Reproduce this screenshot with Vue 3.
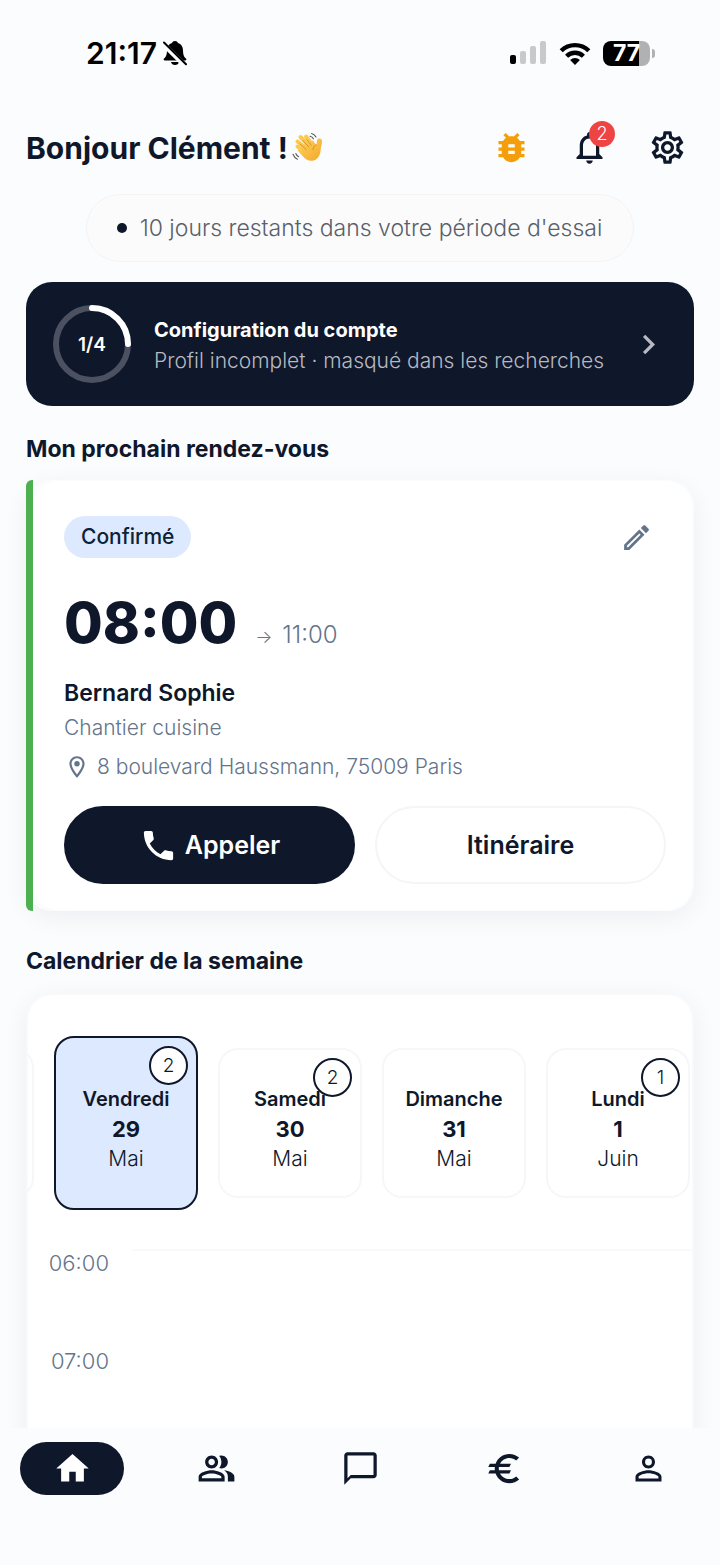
<script setup>
import { ref, onMounted } from 'vue'

const days = [
  { id: 'd29', name: 'Vendredi', date: '29', month: 'Mai', count: 2 },
  { id: 'd30', name: 'Samedi', date: '30', month: 'Mai', count: 2 },
  { id: 'd31', name: 'Dimanche', date: '31', month: 'Mai', count: 0 },
  { id: 'd01', name: 'Lundi', date: '1', month: 'Juin', count: 1 }
]
const hours = ['06:00', '07:00']
const selected = ref('d29')
const strip = ref(null)

const tabs = [
  { id: 'home', label: 'Accueil', path: 'M10 20v-6h4v6h5v-8h3L12 3 2 12h3v8z' },
  { id: 'clients', label: 'Clients', path: 'M16.67 13.13C18.04 14.06 19 15.32 19 17v3h4v-3c0-2.18-3.57-3.47-6.33-3.87zM15 12c2.21 0 4-1.79 4-4s-1.79-4-4-4c-.47 0-.91.1-1.33.24C14.5 5.27 15 6.58 15 8s-.5 2.73-1.33 3.76c.42.14.86.24 1.33.24zM9 12c2.21 0 4-1.79 4-4s-1.79-4-4-4-4 1.79-4 4 1.79 4 4 4zm0-6c1.1 0 2 .9 2 2s-.9 2-2 2-2-.9-2-2 .9-2 2-2zM9 13c-2.67 0-8 1.34-8 4v3h16v-3c0-2.66-5.33-4-8-4zm6 5H3v-.99C3.2 16.29 6.3 15 9 15s5.8 1.29 6 2v1z' },
  { id: 'messages', label: 'Messages', path: 'M20 2H4c-1.1 0-2 .9-2 2v18l4-4h14c1.1 0 2-.9 2-2V4c0-1.1-.9-2-2-2zm0 14H6l-2 2V4h16v12z' },
  { id: 'billing', label: 'Factures', path: 'M15 18.5c-2.51 0-4.68-1.42-5.76-3.5H15l1-2H8.58c-.05-.33-.08-.66-.08-1s.03-.67.08-1H15l1-2H9.24C10.32 6.92 12.5 5.5 15 5.5c1.61 0 3.09.59 4.23 1.57L21 5.3C19.41 3.87 17.3 3 15 3c-3.92 0-7.24 2.51-8.48 6H3l-1 2h4.06c-.04.33-.06.66-.06 1s.02.67.06 1H3l-1 2h4.52c1.24 3.49 4.56 6 8.48 6 2.31 0 4.41-.87 6-2.3l-1.78-1.77c-1.13.98-2.6 1.57-4.22 1.57z' },
  { id: 'profile', label: 'Profil', path: 'M12 5.9a2.1 2.1 0 1 1 0 4.2 2.1 2.1 0 0 1 0-4.2m0 9c2.97 0 6.1 1.46 6.1 2.1v1.1H5.9V17c0-.64 3.13-2.1 6.1-2.1M12 4C9.79 4 8 5.79 8 8s1.79 4 4 4 4-1.79 4-4-1.79-4-4-4zm0 9c-2.67 0-8 1.34-8 4v3h16v-3c0-2.66-5.33-4-8-4z' }
]
const activeTab = ref('home')

// Bring the selected day to the left of the strip
onMounted(() => {
  const el = strip.value.querySelector('.day.active')
  strip.value.scrollLeft = el.offsetLeft - strip.value.offsetLeft - 26
})
</script>

<template>
  <div class="app">
    <div class="status">
      <div class="status-left">
        <span>21:17</span>
        <svg class="muted" viewBox="0 0 24 26" aria-hidden="true">
          <path d="M12 1c1.600 0 2.600.8 3 2 3.300 1 4.900 3.800 5 7.300.1 4.600 1 6.600 3 8.300.6.600.5 1.900-.8 1.900H1.800c-1.300 0-1.400-1.300-.8-1.900 2-1.700 2.900-3.700 3-8.300.1-3.500 1.700-6.300 5-7.300.4-1.200 1.400-2 3-2zM8 22h8c-.4 2-2 3-4 3s-3.600-1-4-3z" fill="currentColor" />
          <path d="M-.5 3.300 22.500 26" stroke="#fafcfe" stroke-width="5" />
          <path d="M1 2.500 23 24.200" stroke="currentColor" stroke-width="2" stroke-linecap="round" />
        </svg>
      </div>
      <div class="status-right">
        <svg class="signal" viewBox="0 0 37 24" aria-hidden="true">
          <rect x="0" y="14" width="6" height="9" rx="2" />
          <g fill="#c8c9cb">
            <rect x="10" y="10" width="6" height="13" rx="2" />
            <rect x="20" y="5" width="6" height="18" rx="2" />
            <rect x="30" y="0" width="6" height="23" rx="2" />
          </g>
        </svg>
        <svg class="wifi" viewBox="0 0 32 23" aria-hidden="true">
          <g fill="none" stroke="currentColor" stroke-width="4.400">
            <path d="M2.200 8.800a19.600 19.600 0 0 1 27.600 0" />
            <path d="M7.600 14.200a12 12 0 0 1 16.800 0" />
          </g>
          <path d="M16 23l-4.900-4.900a7 7 0 0 1 9.800 0z" />
        </svg>
        <div class="battery"><span class="level">77</span></div>
      </div>
    </div>

    <main class="content">
      <header class="head">
        <h1>
          Bonjour Clément !
          <svg class="wave" viewBox="0 0 32 32" role="img" aria-label="Salut">
            <defs>
              <linearGradient id="skin" x1="0" y1="0" x2="1" y2="1">
                <stop offset="0" stop-color="#ffd45c" />
                <stop offset="1" stop-color="#f3a72c" />
              </linearGradient>
            </defs>
            <g stroke="#fdc94c" stroke-linecap="round" fill="none" stroke-width="4">
              <path d="M15 17 5.500 9.500" />
              <path d="M17.500 14.500 8.500 5" />
              <path d="M20.500 13 14 4.500" />
              <path d="M13 20 5.500 14.500" />
            </g>
            <path d="M11 13 21 8.500c1 1.500 2.200 3.300 3.300 4.200.9-1.500.2-3.600 1-5.200.8-1.500 4.300-1.200 4.600.8.500 3-.9 5.500-1.100 8.500-.2 5.500-2.500 11.200-8.200 12-4.300.5-7.300-1.800-10-4.800l-5-5.500z" fill="url(#skin)" />
            <path d="M7.700 11.800l6.500 5.700M11 8.500l5.800 6.500M14.800 7.500l4.500 5.800M24.300 12.800c-2 1-3.200 2.800-3.300 5" stroke="#d98a22" stroke-width=".9" fill="none" stroke-linecap="round" />
            <path d="M18 4.200c1.500.4 2.700 1.300 3.400 2.600M19.600 1.500c2 .7 3.500 1.900 4.400 3.600M3.800 21.500c.5 1.400 1.500 2.600 2.900 3.300M1 22.300c.8 2.200 2.300 3.900 4.400 4.900" stroke="#5b5b60" stroke-width="1.100" fill="none" stroke-linecap="round" />
          </svg>
        </h1>
        <div class="actions">
          <button type="button" class="icon-btn bug" aria-label="Signaler un bug">
            <svg viewBox="0 0 24 24"><path d="M20 8h-2.810c-.45-.78-1.070-1.450-1.820-1.960L17 4.410 15.590 3l-2.170 2.170C12.960 5.060 12.490 5 12 5c-.49 0-.96.06-1.410.17L8.410 3 7 4.410l1.620 1.630C7.880 6.550 7.260 7.220 6.810 8H4v2h2.090c-.05.33-.09.66-.09 1v1H4v2h2v1c0 .34.04.67.09 1H4v2h2.810c1.040 1.790 2.970 3 5.190 3s4.150-1.210 5.190-3H20v-2h-2.090c.05-.33.09-.66.09-1v-1h2v-2h-2v-1c0-.34-.04-.67-.09-1H20V8zm-6 8h-4v-2h4v2zm0-4h-4v-2h4v2z" /></svg>
          </button>
          <button type="button" class="icon-btn" aria-label="Notifications">
            <svg viewBox="0 0 24 24"><path d="M12 22c1.100 0 2-.9 2-2h-4c0 1.100.9 2 2 2zm6-6v-5c0-3.070-1.630-5.640-4.500-6.320V4c0-.83-.67-1.500-1.500-1.500s-1.500.67-1.500 1.500v.68C7.640 5.360 6 7.920 6 11v5l-2 2v1h16v-1l-2-2zm-2 1H8v-6c0-2.480 1.510-4.500 4-4.500s4 2.020 4 4.500v6z" /></svg>
            <span class="notif">2</span>
          </button>
          <button type="button" class="icon-btn" aria-label="Réglages">
            <svg viewBox="0 0 24 24"><path d="M19.430 12.980c.04-.32.07-.64.07-.98 0-.34-.03-.66-.07-.98l2.110-1.650c.19-.15.24-.42.12-.64l-2-3.460c-.09-.16-.26-.25-.44-.25-.06 0-.12.01-.17.03l-2.490 1c-.52-.4-1.080-.73-1.690-.98l-.38-2.650C14.460 2.180 14.250 2 14 2h-4c-.25 0-.46.18-.49.42l-.38 2.650c-.61.25-1.170.59-1.690.98l-2.490-1c-.06-.02-.12-.03-.18-.03-.17 0-.34.09-.43.25l-2 3.460c-.13.22-.07.49.12.64l2.110 1.650c-.04.32-.07.65-.07.98 0 .33.03.66.07.98l-2.110 1.650c-.19.15-.24.42-.12.64l2 3.460c.09.16.26.25.44.25.06 0 .12-.01.17-.03l2.490-1c.52.4 1.080.73 1.690.98l.38 2.650c.03.24.24.42.49.42h4c.25 0 .46-.18.49-.42l.38-2.650c.61-.25 1.170-.59 1.690-.98l2.490 1c.06.02.12.03.18.03.17 0 .34-.09.43-.25l2-3.460c.12-.22.07-.49-.12-.64l-2.110-1.650zm-1.980-1.710c.04.31.05.52.05.73 0 .21-.02.43-.05.73l-.14 1.130.89.7 1.080.84-.7 1.210-1.270-.51-1.040-.42-.9.68c-.43.32-.84.56-1.250.73l-1.060.43-.16 1.130-.2 1.350h-1.400l-.19-1.350-.16-1.130-1.060-.43c-.43-.18-.83-.41-1.230-.71l-.91-.7-1.060.43-1.270.51-.7-1.210 1.080-.84.89-.7-.14-1.130c-.03-.31-.05-.54-.05-.74s.02-.43.05-.73l.14-1.130-.89-.7-1.080-.84.7-1.210 1.270.51 1.040.42.9-.68c.43-.32.84-.56 1.250-.73l1.060-.43.16-1.130.2-1.350h1.390l.19 1.350.16 1.130 1.060.43c.43.18.83.41 1.230.71l.91.7 1.060-.43 1.270-.51.7 1.210-1.070.85-.89.7.14 1.130zM12 8c-2.210 0-4 1.790-4 4s1.790 4 4 4 4-1.790 4-4-1.790-4-4-4zm0 6c-1.100 0-2-.9-2-2s.9-2 2-2 2 .9 2 2-.9 2-2 2z" /></svg>
          </button>
        </div>
      </header>

      <p class="trial"><i class="dot"></i>10 jours restants dans votre période d'essai</p>

      <a class="setup" href="#">
        <span class="ring">
          <svg viewBox="0 0 78 78" aria-hidden="true">
            <circle cx="39" cy="39" r="36" class="track" />
            <path d="M39 3a36 36 0 0 1 36 36" class="done" />
          </svg>
          <b>1/4</b>
        </span>
        <span class="setup-text">
          <strong>Configuration du compte</strong>
          <span>Profil incomplet · masqué dans les recherches</span>
        </span>
        <svg class="chevron" viewBox="0 0 24 24" aria-hidden="true"><path d="M10 6 8.590 7.410 13.170 12l-4.580 4.590L10 18l6-6z" /></svg>
      </a>

      <h2 class="first">Mon prochain rendez-vous</h2>
      <article class="appt">
        <i class="bar"></i>
        <div class="appt-body">
          <div class="appt-top">
            <span class="chip">Confirmé</span>
            <button type="button" class="edit" aria-label="Modifier">
              <svg viewBox="0 0 24 24"><path d="M14.060 9.020l.92.92L5.920 19H5v-.92l9.060-9.060M17.660 3c-.25 0-.51.1-.7.29l-1.830 1.830 3.750 3.750 1.830-1.830c.39-.39.39-1.020 0-1.410l-2.340-2.340c-.2-.2-.45-.29-.71-.29zm-3.600 3.190L3 17.250V21h3.750L17.810 9.940l-3.750-3.750z" /></svg>
            </button>
          </div>
          <div class="time"><strong>08:00</strong><span class="arrow">→</span><span class="end">11:00</span></div>
          <h3>Bernard Sophie</h3>
          <p class="job">Chantier cuisine</p>
          <p class="address">
            <svg viewBox="0 0 24 24" aria-hidden="true"><path d="M12 2C8.130 2 5 5.130 5 9c0 5.250 7 13 7 13s7-7.750 7-13c0-3.870-3.130-7-7-7zM7 9c0-2.760 2.240-5 5-5s5 2.240 5 5c0 2.880-2.880 7.190-5 9.880C9.920 16.210 7 11.850 7 9z" /><circle cx="12" cy="9" r="2.500" /></svg>
            8 boulevard Haussmann, 75009 Paris
          </p>
          <div class="buttons">
            <button type="button" class="btn primary">
              <svg viewBox="0 0 24 24" aria-hidden="true"><path d="M6.620 10.790c1.440 2.830 3.760 5.140 6.590 6.590l2.200-2.200c.27-.27.67-.36 1.020-.24 1.120.37 2.330.57 3.570.57.55 0 1 .45 1 1V20c0 .55-.45 1-1 1-9.390 0-17-7.610-17-17 0-.55.45-1 1-1h3.500c.55 0 1 .45 1 1 0 1.250.2 2.450.57 3.570.11.35.03.74-.25 1.020l-2.200 2.200z" /></svg>
              Appeler
            </button>
            <button type="button" class="btn">Itinéraire</button>
          </div>
        </div>
      </article>

      <h2>Calendrier de la semaine</h2>
      <section class="calendar">
        <div ref="strip" class="strip">
          <div class="day" aria-hidden="true"></div>
          <button
            v-for="d in days"
            :key="d.id"
            type="button"
            class="day"
            :class="{ active: selected === d.id }"
            @click="selected = d.id"
          >
            <strong>{{ d.name }}</strong>
            <b>{{ d.date }}</b>
            <span>{{ d.month }}</span>
            <em v-if="d.count">{{ d.count }}</em>
          </button>
        </div>
        <ol class="hours">
          <li v-for="h in hours" :key="h"><time>{{ h }}</time><i></i></li>
        </ol>
      </section>
    </main>

    <nav class="tabs">
      <a v-for="t in tabs" :key="t.id" href="#" :class="{ on: activeTab === t.id }" :aria-label="t.label" @click.prevent="activeTab = t.id">
        <svg viewBox="0 0 24 24" aria-hidden="true"><path :d="t.path" /></svg>
      </a>
    </nav>
  </div>
</template>

<style>
body {
  background: #fafcfe;
}
</style>

<style scoped>
* {
  box-sizing: border-box;
}
.app {
  height: 100vh;
  display: flex;
  flex-direction: column;
  background: #fafcfe;
  color: #0f172a;
  font-family: Inter, "Liberation Sans", sans-serif;
  font-weight: 300;
}
svg {
  display: block;
  flex: none;
  fill: currentColor;
}
button {
  font: inherit;
  color: inherit;
  background: none;
  border: 0;
  padding: 0;
}
h1, h2, h3, p, ol {
  margin: 0;
  padding: 0;
}

.status {
  flex: none;
  height: 106px;
  padding: 0 70px 0 86px;
  display: flex;
  align-items: center;
  justify-content: space-between;
  color: #000;
}
.status-left, .status-right {
  display: flex;
  align-items: center;
}
.status-left {
  gap: 6px;
  font-size: 30px;
  font-weight: 600;
}
.muted { width: 24px; height: 26px; }
.status-right { gap: 12px; }
.signal { width: 37px; height: 24px; }
.wifi { width: 32px; height: 23px; }
.battery {
  position: relative;
  width: 47px;
  height: 25px;
  border-radius: 8px;
  background: linear-gradient(90deg, #000 76%, #b0b1b3 76%);
  color: #fff;
  font-size: 23px;
  line-height: 25px;
  font-weight: 700;
  text-align: center;
}
.battery::after {
  content: "";
  position: absolute;
  left: 49px;
  top: 8px;
  width: 3px;
  height: 9px;
  border-radius: 0 3px 3px 0;
  background: #b0b1b3;
}

.content {
  flex: 1;
  min-height: 0;
  padding: 0 26px;
  overflow: hidden;
}
.head {
  height: 84px;
  display: flex;
  align-items: center;
  justify-content: space-between;
}
h1 {
  display: flex;
  align-items: center;
  gap: 4px;
  font-size: 30px;
  font-weight: 700;
}
.wave { width: 32px; height: 32px; }
.actions {
  display: flex;
  gap: 39px;
  padding: 0 7px 2px 0;
}
.icon-btn { position: relative; }
.icon-btn svg { width: 39px; height: 39px; }
.bug { color: #f59e0b; }
.notif {
  position: absolute;
  top: -7px;
  right: -6px;
  width: 26px;
  height: 26px;
  border-radius: 50%;
  background: #ef4444;
  color: #fff;
  font-size: 18px;
  line-height: 26px;
}

.trial {
  width: fit-content;
  margin: 4px auto 20px;
  height: 68px;
  padding: 0 31px 0 30px;
  display: flex;
  align-items: center;
  gap: 13px;
  border: 1px solid #f2f4f6;
  border-radius: 34px;
  background: #fbfbfb;
  color: #5a5f6b;
  font-size: 23px;
}
.dot {
  width: 10px;
  height: 10px;
  border-radius: 50%;
  background: #0f172a;
}

.setup {
  display: flex;
  align-items: center;
  gap: 23px;
  height: 124px;
  padding: 0 26px 0 27px;
  border-radius: 26px;
  background: #0f172a;
  color: #fff;
  text-decoration: none;
}
.ring {
  position: relative;
  display: grid;
  place-items: center;
}
.ring svg, .ring b { grid-area: 1 / 1; }
.ring svg { width: 78px; height: 78px; }
.ring b {
  font-size: 19px;
  font-weight: 600;
}
.track, .done {
  fill: none;
  stroke-width: 6;
}
.track { stroke: #4b5161; }
.done { stroke: #fff; stroke-linecap: round; }
.setup-text {
  flex: 1;
  display: grid;
  gap: 3px;
  padding-top: 2px;
  line-height: 28px;
}
.setup-text strong {
  font-size: 20px;
  font-weight: 700;
}
.setup-text span {
  font-size: 21px;
  color: #b7bac2;
}
.chevron {
  width: 39px;
  height: 39px;
  color: #b7bac2;
}

h2 {
  margin: 36px 0 18px;
  font-size: 23px;
  line-height: 28px;
  font-weight: 700;
}
h2.first { margin: 29px 0 17px; }

.appt {
  display: flex;
  border-radius: 26px;
  box-shadow: 0 6px 26px rgba(15, 23, 42, 0.06);
}
.bar {
  width: 7px;
  border-radius: 6px 0 0 6px;
  background: #4caf50;
}
.appt-body {
  flex: 1;
  margin: 1px 2px 1px 0;
  padding: 35px 26px 26px 31px;
  border-radius: 26px;
  background: #fff;
}
.appt-top {
  display: flex;
  align-items: center;
  justify-content: space-between;
  padding-right: 13px;
}
.chip {
  padding: 0 17px;
  border-radius: 21px;
  background: #dde9ff;
  color: #0b2238;
  font-size: 21px;
  line-height: 42px;
  font-weight: 500;
}
.edit { color: #64748b; }
.edit svg { width: 33px; height: 33px; }
.time {
  display: flex;
  align-items: baseline;
  margin: 33px 0 24px;
  line-height: 28px;
  color: #64748b;
}
.time strong {
  margin-right: 18px;
  font-size: 56px;
  line-height: 64px;
  font-weight: 800;
  color: #0f172a;
}
.arrow {
  margin-right: 10px;
  font-size: 18px;
}
.end { font-size: 24px; }
h3 {
  font-size: 23px;
  line-height: 28px;
  font-weight: 600;
}
.job, .address {
  font-size: 21px;
  line-height: 28px;
  color: #64748b;
}
.job { margin: 7px 0 11px; }
.address {
  display: flex;
  align-items: center;
  gap: 7px;
}
.address svg { width: 26px; height: 26px; }
.buttons {
  display: grid;
  grid-template-columns: 1fr 1fr;
  gap: 20px;
  margin-top: 25px;
}
.btn {
  height: 78px;
  display: flex;
  align-items: center;
  justify-content: center;
  gap: 7px;
  border: 2px solid #f3f5f7;
  border-radius: 39px;
  font-size: 25px;
  font-weight: 600;
}
.btn svg { width: 39px; height: 39px; }
.primary {
  border-color: #0f172a;
  background: #0f172a;
  color: #fff;
}

.calendar {
  border: 2px solid #f7f9fb;
  border-bottom: 0;
  border-radius: 26px 26px 0 0;
  background: #fff;
  box-shadow: 0 6px 26px rgba(15, 23, 42, 0.06);
}
.strip {
  display: flex;
  align-items: center;
  gap: 20px;
  margin-top: 41px;
  padding: 0 26px;
  overflow-x: auto;
  scrollbar-width: none;
}
.day {
  position: relative;
  flex: none;
  width: 144px;
  height: 150px;
  display: flex;
  flex-direction: column;
  align-items: center;
  justify-content: center;
  gap: 2px;
  padding-top: 12px;
  border: 2px solid #f5f7f8;
  border-radius: 20px;
  line-height: 28px;
  font-size: 21px;
}
.day.active {
  height: 174px;
  border-color: #0f172a;
  background: #dde9ff;
}
.day strong { font-size: 20px; font-weight: 600; }
.day b { font-size: 22px; font-weight: 700; }
.day em {
  position: absolute;
  top: 8px;
  right: 8px;
  width: 39px;
  height: 39px;
  border: 2px solid #0f172a;
  border-radius: 50%;
  background: #fff;
  font-size: 19px;
  font-style: normal;
  line-height: 35px;
}
.hours {
  margin-top: 39px;
  list-style: none;
}
.hours li {
  display: flex;
  gap: 23px;
  height: 98px;
  padding-left: 17px;
}
.hours time {
  width: 64px;
  text-align: right;
  font-size: 22px;
  line-height: 28px;
  color: #64748b;
}
.hours i { flex: 1; }
.hours li:first-child i { border-top: 2px solid #f7f9fa; }

.tabs {
  flex: none;
  position: relative;
  display: grid;
  grid-template-columns: repeat(5, 1fr);
  padding: 14px 0 70px;
  background: #fafcfe;
}
.tabs a {
  display: grid;
  place-items: center;
  height: 53px;
  margin: 0 20px;
  border-radius: 27px;
  color: #0f172a;
}
.tabs a.on {
  background: #0f172a;
  color: #fff;
}
.tabs svg { width: 39px; height: 39px; }
</style>
